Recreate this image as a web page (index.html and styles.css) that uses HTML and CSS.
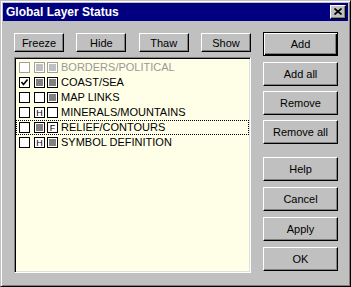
FILE: index.html
```html
<!DOCTYPE html>
<html lang="en">
<head>
<meta charset="UTF-8" />
<title>Global Layer Status</title>
<link rel="stylesheet" href="styles.css">
</head>
<body>
<div class="window">
  <div class="titlebar">
    <span class="title">Global Layer Status</span>
    <div class="close-btn">
      <svg width="8" height="7" viewBox="0 0 8 7"><path d="M0.5 0.5 L7.5 6.5 M7.5 0.5 L0.5 6.5" stroke="#000" stroke-width="1.7" fill="none"/></svg>
    </div>
  </div>
  <div class="content">
    <div class="left-col">
      <div class="top-buttons">
        <div class="btn small">Freeze</div>
        <div class="btn small">Hide</div>
        <div class="btn small">Thaw</div>
        <div class="btn small">Show</div>
      </div>
      <div class="layer-list">
        <div class="row disabled">
          <span class="box"></span>
          <span class="box mid filled"></span>
          <span class="box last filled"></span>
          <span class="label">BORDERS/POLITICAL</span>
        </div>
        <div class="row">
          <span class="box checked"><svg width="9" height="9" viewBox="0 0 9 9"><path d="M1.5 4 L3.5 6.5 L7.5 1.5" stroke="#000" stroke-width="1.6" fill="none"/></svg></span>
          <span class="box mid filled"></span>
          <span class="box last filled"></span>
          <span class="label">COAST/SEA</span>
        </div>
        <div class="row">
          <span class="box"></span>
          <span class="box mid"></span>
          <span class="box last filled"></span>
          <span class="label">MAP LINKS</span>
        </div>
        <div class="row">
          <span class="box"></span>
          <span class="box mid letter">H</span>
          <span class="box last"></span>
          <span class="label">MINERALS/MOUNTAINS</span>
        </div>
        <div class="row focused">
          <span class="box"></span>
          <span class="box mid filled"></span>
          <span class="box last letter">F</span>
          <span class="label">RELIEF/CONTOURS</span>
        </div>
        <div class="row">
          <span class="box"></span>
          <span class="box mid letter">H</span>
          <span class="box last filled"></span>
          <span class="label">SYMBOL DEFINITION</span>
        </div>
      </div>
    </div>
    <div class="right-col">
      <div class="btn-group">
        <div class="btn default">Add</div>
        <div class="btn">Add all</div>
        <div class="btn">Remove</div>
        <div class="btn">Remove all</div>
      </div>
      <div class="btn-group lower">
        <div class="btn">Help</div>
        <div class="btn">Cancel</div>
        <div class="btn">Apply</div>
        <div class="btn">OK</div>
      </div>
    </div>
  </div>
</div>
</body>
</html>
```

FILE: styles.css
```css
body {
  margin: 0;
  font-family: "Liberation Sans", Arial, sans-serif;
  font-size: 11px;
  background: #c0c0c0;
}
.window {
  width: 351px;
  height: 287px;
  box-sizing: border-box;
  background: #c0c0c0;
  border: 1px solid;
  border-color: #c0c0c0 #000 #000 #c0c0c0;
  box-shadow: inset 1px 1px #fff, inset -1px -1px #808080;
  padding: 2px;
}
.titlebar {
  height: 18px;
  background: #000080;
  display: flex;
  align-items: center;
  justify-content: space-between;
  padding: 0 2px 0 3px;
}
.title {
  color: #fff;
  font-weight: bold;
  font-size: 12px;
  line-height: 18px;
}
.close-btn {
  width: 16px;
  height: 14px;
  box-sizing: border-box;
  background: #c0c0c0;
  border: 1px solid;
  border-color: #fff #000 #000 #fff;
  box-shadow: inset -1px -1px #808080;
  display: flex;
  align-items: center;
  justify-content: center;
  padding: 0 1px 1px 0;
}
.close-btn svg { display: block; }

.content {
  display: flex;
  gap: 12px;
  padding: 11px 0 0 11px;
}
.left-col {
  width: 237px;
  margin-top: 1px;
}
.top-buttons {
  display: flex;
  justify-content: space-between;
}
.btn {
  height: 24px;
  box-sizing: border-box;
  background: #c0c0c0;
  border: 1px solid;
  border-color: #fff #000 #000 #fff;
  box-shadow: inset -1px -1px #808080;
  display: flex;
  align-items: center;
  justify-content: center;
  color: #000;
}
.btn.small {
  width: 50px;
  height: 19px;
}
.btn.default {
  border: 1px solid #000;
  box-shadow: inset 1px 1px #fff, inset -1px -1px #000, inset -2px -2px #808080;
}

.layer-list {
  margin-top: 5px;
  height: 216px;
  box-sizing: border-box;
  background: #ffffe8;
  border: 1px solid;
  border-color: #808080 #fff #fff #808080;
  box-shadow: inset 1px 1px #000, inset -1px -1px #dfdfdf;
  padding: 2px 1px 0 1px;
}
.row {
  height: 15px;
  box-sizing: border-box;
  border: 1px solid transparent;
  display: flex;
  align-items: center;
  padding-left: 2px;
}
.row.focused {
  border: 1px dotted #000;
}
.box {
  width: 11px;
  height: 11px;
  box-sizing: border-box;
  border: 1px solid #000;
  background: #fff;
  display: flex;
  align-items: center;
  justify-content: center;
  margin-right: 4px;
}
.box.letter {
  font-size: 9px;
  line-height: 9px;
  padding-top: 1px;
}
.box.mid { margin-right: 2px; }
.box.last { margin-right: 3px; }
.box svg { display: block; }
.box.filled {
  background: #808080;
  box-shadow: inset 0 0 0 1px #fff;
}
.label {
  line-height: 13px;
  color: #000;
}
.row.disabled .box {
  border-color: #a0a0a0;
}
.row.disabled .box.filled {
  background: #c0c0c0;
}
.row.disabled .label {
  color: #999;
}

.right-col {
  width: 75px;
}
.btn-group {
  display: flex;
  flex-direction: column;
  gap: 5px;
}
.btn-group .default {
  margin-bottom: 1px;
}
.btn-group.lower {
  margin-top: 13px;
  gap: 6px;
}
```
